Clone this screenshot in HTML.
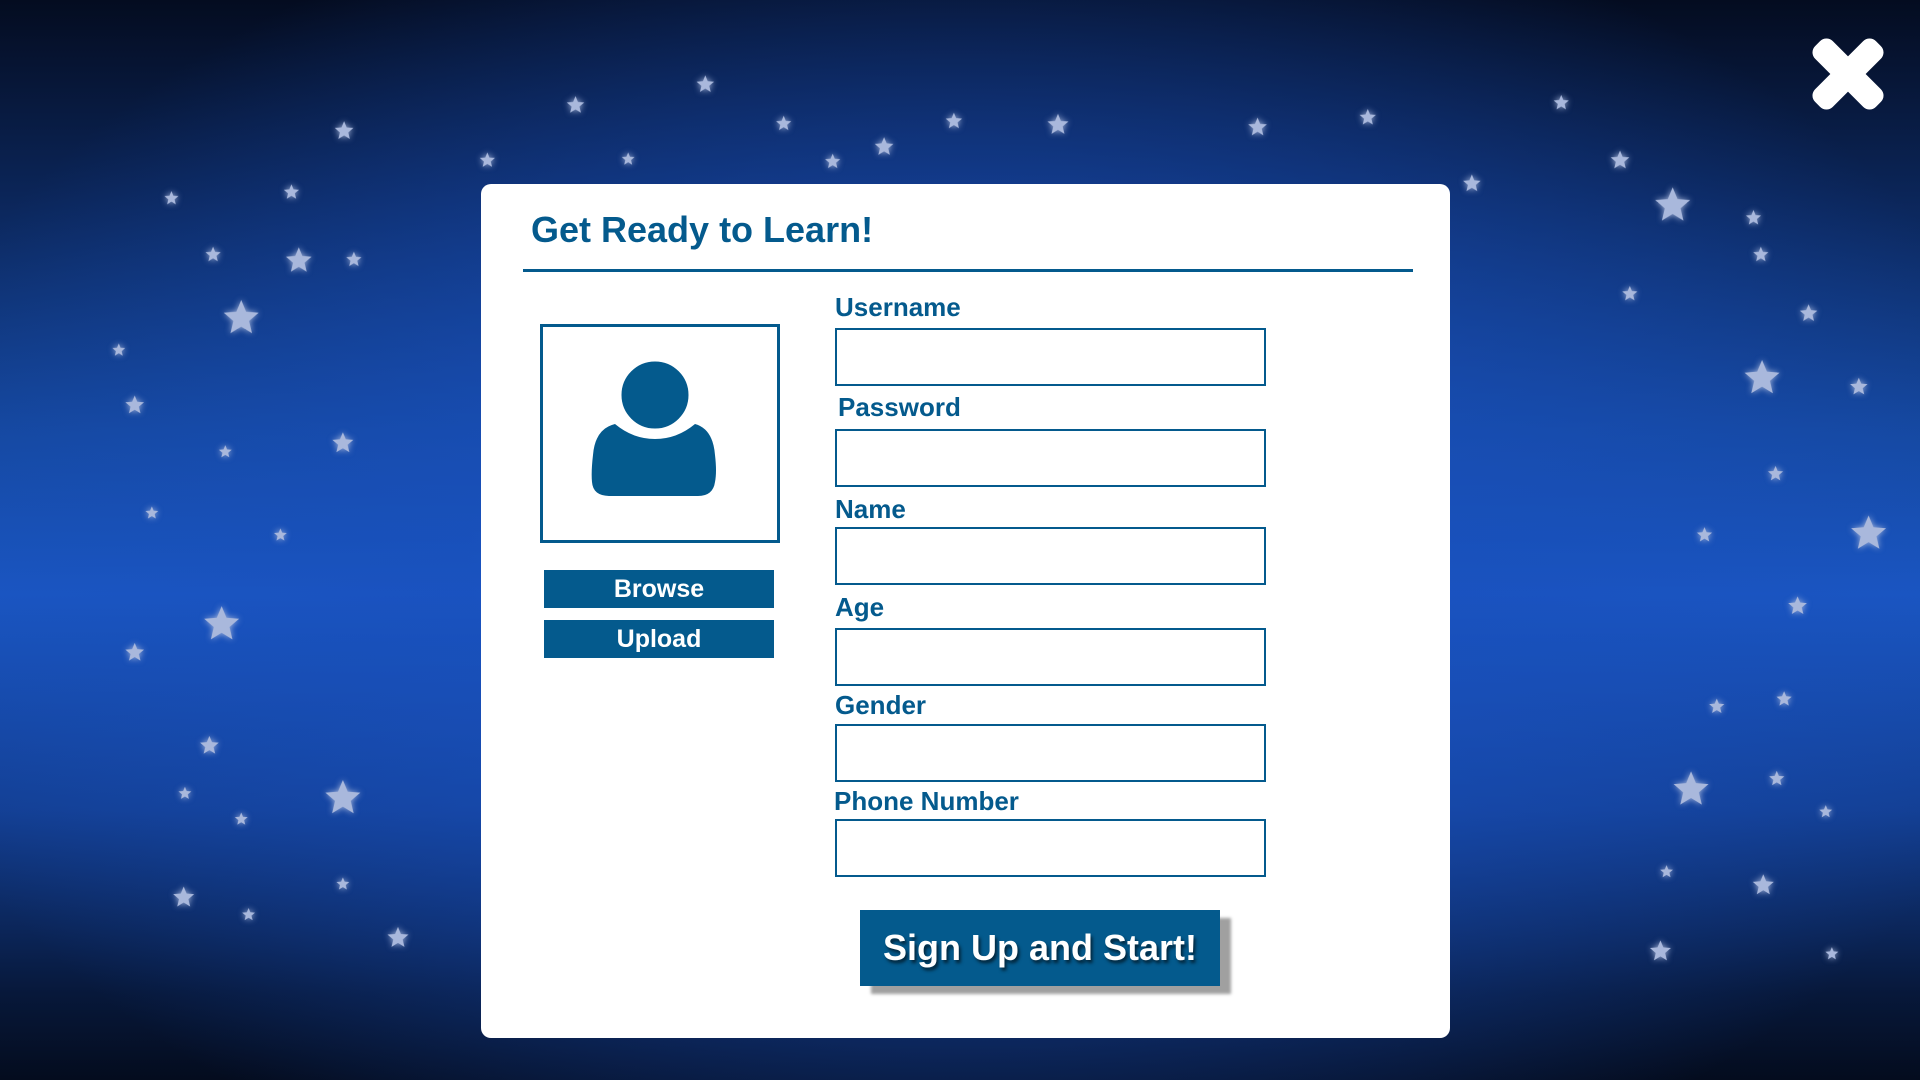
<!DOCTYPE html>
<html><head><meta charset="utf-8">
<style>
html,body{margin:0;padding:0;width:1920px;height:1080px;overflow:hidden}
body{position:relative;font-family:"Liberation Sans",sans-serif;
background:
radial-gradient(ellipse 1100px 700px at 960px 560px, rgba(30,95,210,0.9) 0%, rgba(25,80,190,0.6) 45%, rgba(5,15,40,0) 100%),
linear-gradient(to bottom,#040c20 0%,#0b2558 18%,#15489f 40%,#1a56c2 55%,#133f93 75%,#07183a 92%,#040c1e 100%);}
#stars{position:absolute;left:0;top:0}
.modal{position:absolute;left:481px;top:184px;width:969px;height:854px;background:#fff;border-radius:10px}
.t{position:absolute;color:#045a8d;font-weight:bold}
.title{left:50px;top:25px;font-size:36px}
.line{position:absolute;left:42px;top:85px;width:890px;height:3px;background:#045a8d}
.av{position:absolute;left:59px;top:140px;width:240px;height:219px;border:3px solid #045a8d;box-sizing:border-box}
.btn{position:absolute;left:63px;width:230px;height:38px;background:#045a8d;color:#fff;font-weight:bold;font-size:25px;text-align:center;line-height:38px}
.lab{position:absolute;left:354px;font-size:26px;color:#045a8d;font-weight:bold}
.in{position:absolute;left:354px;width:431px;height:58px;border:2.5px solid #045a8d;box-sizing:border-box}
.sign{position:absolute;left:379px;top:726px;width:360px;height:76px;background:#045a8d;color:#fff;font-weight:bold;font-size:36px;text-align:center;line-height:76px;
box-shadow:11px 8px 3px #a0a0a0;text-shadow:2px 3px 3px rgba(0,0,0,0.6)}
</style></head><body>
<svg id="stars" width="1920" height="1080" viewBox="0 0 1568 882">
<defs>
<filter id="g" x="-1" y="-1" width="3" height="3"><feGaussianBlur stdDeviation="2.5" result="b"/><feMerge><feMergeNode in="b"/><feMergeNode in="SourceGraphic"/></feMerge></filter>
<polygon id="st" points="0,-10 2.65,-3.64 9.51,-3.09 4.28,1.39 5.88,8.09 0,4.5 -5.88,8.09 -4.28,1.39 -9.51,-3.09 -2.65,-3.64"/>
</defs>
<g fill="#a9b8dc" filter="url(#g)">
<use href="#st" transform="translate(281,107) scale(.8)"/>
<use href="#st" transform="translate(470,86) scale(.75)"/>
<use href="#st" transform="translate(576,69) scale(.75)"/>
<use href="#st" transform="translate(640,101) scale(.65)"/>
<use href="#st" transform="translate(722,120) scale(.8)"/>
<use href="#st" transform="translate(680,132) scale(.65)"/>
<use href="#st" transform="translate(779,99) scale(.7)"/>
<use href="#st" transform="translate(864,102) scale(.9)"/>
<use href="#st" transform="translate(1027,104) scale(.8)"/>
<use href="#st" transform="translate(1117,96) scale(.7)"/>
<use href="#st" transform="translate(1202,150) scale(.75)"/>
<use href="#st" transform="translate(1275,84) scale(.65)"/>
<use href="#st" transform="translate(1323,131) scale(.8)"/>
<use href="#st" transform="translate(1366,168) scale(1.5)"/>
<use href="#st" transform="translate(1432,178) scale(.65)"/>
<use href="#st" transform="translate(1438,208) scale(.65)"/>
<use href="#st" transform="translate(1331,240) scale(.65)"/>
<use href="#st" transform="translate(1477,256) scale(.75)"/>
<use href="#st" transform="translate(1439,309) scale(1.5)"/>
<use href="#st" transform="translate(1518,316) scale(.75)"/>
<use href="#st" transform="translate(1450,387) scale(.65)"/>
<use href="#st" transform="translate(1392,437) scale(.65)"/>
<use href="#st" transform="translate(1526,436) scale(1.5)"/>
<use href="#st" transform="translate(1468,495) scale(.8)"/>
<use href="#st" transform="translate(1402,577) scale(.65)"/>
<use href="#st" transform="translate(1457,571) scale(.65)"/>
<use href="#st" transform="translate(1381,645) scale(1.5)"/>
<use href="#st" transform="translate(1451,636) scale(.65)"/>
<use href="#st" transform="translate(1491,663) scale(.55)"/>
<use href="#st" transform="translate(1361,712) scale(.55)"/>
<use href="#st" transform="translate(1440,723) scale(.9)"/>
<use href="#st" transform="translate(1356,777) scale(.9)"/>
<use href="#st" transform="translate(1496,779) scale(.55)"/>
<use href="#st" transform="translate(398,131) scale(.65)"/>
<use href="#st" transform="translate(513,130) scale(.55)"/>
<use href="#st" transform="translate(140,162) scale(.6)"/>
<use href="#st" transform="translate(238,157) scale(.65)"/>
<use href="#st" transform="translate(174,208) scale(.65)"/>
<use href="#st" transform="translate(244,213) scale(1.1)"/>
<use href="#st" transform="translate(289,212) scale(.65)"/>
<use href="#st" transform="translate(197,260) scale(1.5)"/>
<use href="#st" transform="translate(97,286) scale(.55)"/>
<use href="#st" transform="translate(110,331) scale(.8)"/>
<use href="#st" transform="translate(184,369) scale(.55)"/>
<use href="#st" transform="translate(280,362) scale(.9)"/>
<use href="#st" transform="translate(124,419) scale(.55)"/>
<use href="#st" transform="translate(229,437) scale(.55)"/>
<use href="#st" transform="translate(181,510) scale(1.5)"/>
<use href="#st" transform="translate(110,533) scale(.8)"/>
<use href="#st" transform="translate(171,609) scale(.8)"/>
<use href="#st" transform="translate(151,648) scale(.55)"/>
<use href="#st" transform="translate(197,669) scale(.55)"/>
<use href="#st" transform="translate(280,652) scale(1.5)"/>
<use href="#st" transform="translate(150,733) scale(.9)"/>
<use href="#st" transform="translate(280,722) scale(.55)"/>
<use href="#st" transform="translate(203,747) scale(.55)"/>
<use href="#st" transform="translate(325,766) scale(.9)"/>
</g>
</svg>
<svg style="position:absolute;left:1808px;top:34px" width="80" height="80" viewBox="-40 -40 80 80">
<g fill="#fff">
<rect x="-43" y="-12.5" width="86" height="25" rx="9" transform="rotate(45)"/>
<rect x="-43" y="-12.5" width="86" height="25" rx="9" transform="rotate(-45)"/>
</g>
</svg>
<div class="modal">
<div class="t title">Get Ready to Learn!</div>
<div class="line"></div>
<div class="av">
<svg width="234" height="213" viewBox="0 0 234 213" style="position:absolute;left:0;top:0">
<path d="M50,128 Q52,102 72,97 Q90,112 112,112 Q134,112 152,97 Q170,102 172,128 Q174,145 172,155 Q170,169 155,169 L67,169 Q50,169 49,155 Q48,145 50,128Z" fill="#045a8d"/>
<ellipse cx="112" cy="68" rx="35" ry="35" fill="#045a8d" stroke="#fff" stroke-width="3"/>
</svg>
</div>
<div class="btn" style="top:386px">Browse</div>
<div class="btn" style="top:436px">Upload</div>
<div class="lab" style="top:108px">Username</div>
<div class="in" style="top:144px"></div>
<div class="lab" style="top:208px;left:357px">Password</div>
<div class="in" style="top:245px"></div>
<div class="lab" style="top:310px">Name</div>
<div class="in" style="top:343px"></div>
<div class="lab" style="top:408px">Age</div>
<div class="in" style="top:444px"></div>
<div class="lab" style="top:506px">Gender</div>
<div class="in" style="top:540px"></div>
<div class="lab" style="top:602px;left:353px">Phone Number</div>
<div class="in" style="top:635px"></div>
<div class="sign">Sign Up and Start!</div>
</div>
</body></html>
